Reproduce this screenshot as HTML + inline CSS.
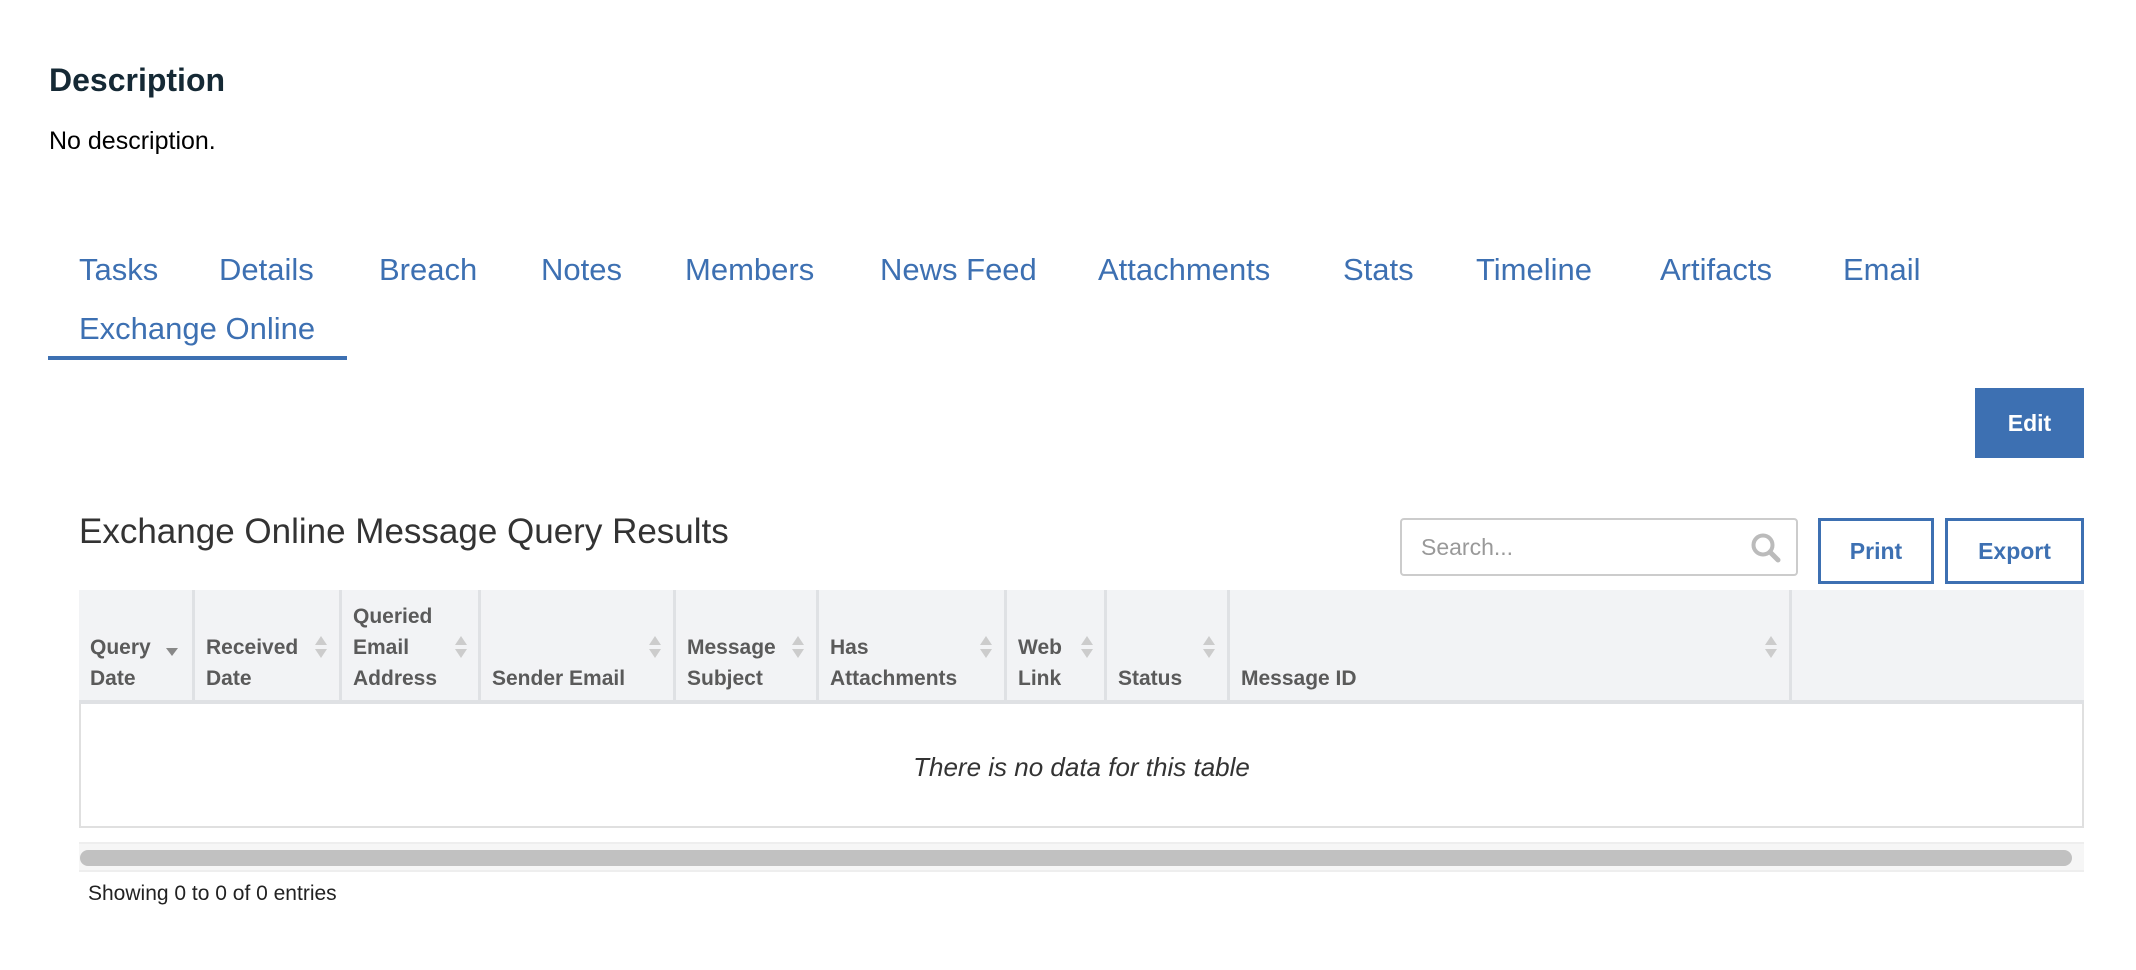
<!DOCTYPE html>
<html><head><meta charset="utf-8"><style>
*{margin:0;padding:0;box-sizing:border-box}
body{width:2136px;height:970px;background:#fff;font-family:"Liberation Sans",sans-serif;position:relative;overflow:hidden;color:#152935}
.a{position:absolute;white-space:nowrap}
.tab{position:absolute;top:252px;font-size:31px;color:#3d70b2}
.th{position:absolute;top:598px;height:106px;border-right:3px solid #dfe1e4;font-weight:bold;font-size:21px;color:#5a5a5a;line-height:31px;padding:0 0 0 11px;display:flex;flex-direction:column;justify-content:flex-end;padding-bottom:10px}
.s{position:absolute;top:635px;width:14px;height:24px}
</style></head><body>
<div class="a" style="left:49px;top:62px;font-size:32px;font-weight:bold">Description</div>
<div class="a" style="left:49px;top:127px;font-size:25px;color:#000">No description.</div>
<div class="tab" style="left:79px">Tasks</div>
<div class="tab" style="left:219px">Details</div>
<div class="tab" style="left:379px">Breach</div>
<div class="tab" style="left:541px">Notes</div>
<div class="tab" style="left:685px">Members</div>
<div class="tab" style="left:880px">News Feed</div>
<div class="tab" style="left:1098px">Attachments</div>
<div class="tab" style="left:1343px">Stats</div>
<div class="tab" style="left:1476px">Timeline</div>
<div class="tab" style="left:1660px">Artifacts</div>
<div class="tab" style="left:1843px">Email</div>
<div class="tab" style="left:79px;top:311px">Exchange Online</div>
<div class="a" style="left:48px;top:356px;width:299px;height:4px;background:#3d70b2"></div>
<div class="a" style="left:1975px;top:388px;width:109px;height:70px;background:#3d70b2;color:#fff;font-weight:bold;font-size:23px;text-align:center;line-height:70px">Edit</div>
<div class="a" style="left:79px;top:512px;font-size:35px;color:#333">Exchange Online Message Query Results</div>
<div class="a" style="left:1400px;top:518px;width:398px;height:58px;border:2px solid #ccc;border-radius:4px;font-size:23px;color:#999;line-height:54px;padding-left:19px">Search...</div>
<svg class="a" style="left:1750px;top:532px" width="32" height="32" viewBox="0 0 32 32"><circle cx="13" cy="13" r="9.5" fill="none" stroke="#bbb" stroke-width="4"/><path d="M20 20l8 8" stroke="#bbb" stroke-width="5" stroke-linecap="round"/></svg>
<div class="a" style="left:1818px;top:518px;width:116px;height:66px;border:3px solid #3d70b2;color:#3d70b2;font-weight:bold;font-size:23px;text-align:center;line-height:60px">Print</div>
<div class="a" style="left:1945px;top:518px;width:139px;height:66px;border:3px solid #3d70b2;color:#3d70b2;font-weight:bold;font-size:23px;text-align:center;line-height:60px">Export</div>
<div class="a" style="left:79px;top:590px;width:2005px;height:238px;border:2px solid #e0e0e0;border-top:none"></div>
<div class="a" style="left:79px;top:590px;width:2005px;height:114px;background:#f2f3f5;border-bottom:4px solid #dfe1e4"></div>
<div class="th" style="left:79px;width:116px;top:590px;height:114px">Query<br>Date</div>
<div class="th" style="left:195px;width:147px;top:590px;height:114px">Received<br>Date</div>
<div class="th" style="left:342px;width:139px;top:590px;height:114px">Queried<br>Email<br>Address</div>
<div class="th" style="left:481px;width:195px;top:590px;height:114px">Sender Email</div>
<div class="th" style="left:676px;width:143px;top:590px;height:114px">Message<br>Subject</div>
<div class="th" style="left:819px;width:188px;top:590px;height:114px">Has<br>Attachments</div>
<div class="th" style="left:1007px;width:100px;top:590px;height:114px">Web<br>Link</div>
<div class="th" style="left:1107px;width:123px;top:590px;height:114px">Status</div>
<div class="th" style="left:1230px;width:562px;top:590px;height:114px">Message ID</div>
<svg class="s" style="left:165px;top:647px" viewBox="0 0 14 24"><path d="M1 1h12l-6 8z" fill="#888"/></svg>
<svg class="s" style="left:314px" viewBox="0 0 14 24"><path d="M7 1l6 9H1zM7 23l6-9H1z" fill="#ccc"/></svg>
<svg class="s" style="left:454px" viewBox="0 0 14 24"><path d="M7 1l6 9H1zM7 23l6-9H1z" fill="#ccc"/></svg>
<svg class="s" style="left:648px" viewBox="0 0 14 24"><path d="M7 1l6 9H1zM7 23l6-9H1z" fill="#ccc"/></svg>
<svg class="s" style="left:791px" viewBox="0 0 14 24"><path d="M7 1l6 9H1zM7 23l6-9H1z" fill="#ccc"/></svg>
<svg class="s" style="left:979px" viewBox="0 0 14 24"><path d="M7 1l6 9H1zM7 23l6-9H1z" fill="#ccc"/></svg>
<svg class="s" style="left:1080px" viewBox="0 0 14 24"><path d="M7 1l6 9H1zM7 23l6-9H1z" fill="#ccc"/></svg>
<svg class="s" style="left:1202px" viewBox="0 0 14 24"><path d="M7 1l6 9H1zM7 23l6-9H1z" fill="#ccc"/></svg>
<svg class="s" style="left:1764px" viewBox="0 0 14 24"><path d="M7 1l6 9H1zM7 23l6-9H1z" fill="#ccc"/></svg>
<div class="a" style="left:79px;top:752px;width:2005px;text-align:center;font-style:italic;font-size:26px;color:#333">There is no data for this table</div>
<div class="a" style="left:79px;top:842px;width:2005px;height:30px;background:#f6f6f6;border-top:2px solid #eee;border-bottom:2px solid #eee"></div>
<div class="a" style="left:80px;top:850px;width:1992px;height:16px;background:#c1c1c1;border-radius:8px"></div>
<div class="a" style="left:88px;top:882px;font-size:21px;color:#222">Showing 0 to 0 of 0 entries</div>
</body></html>
